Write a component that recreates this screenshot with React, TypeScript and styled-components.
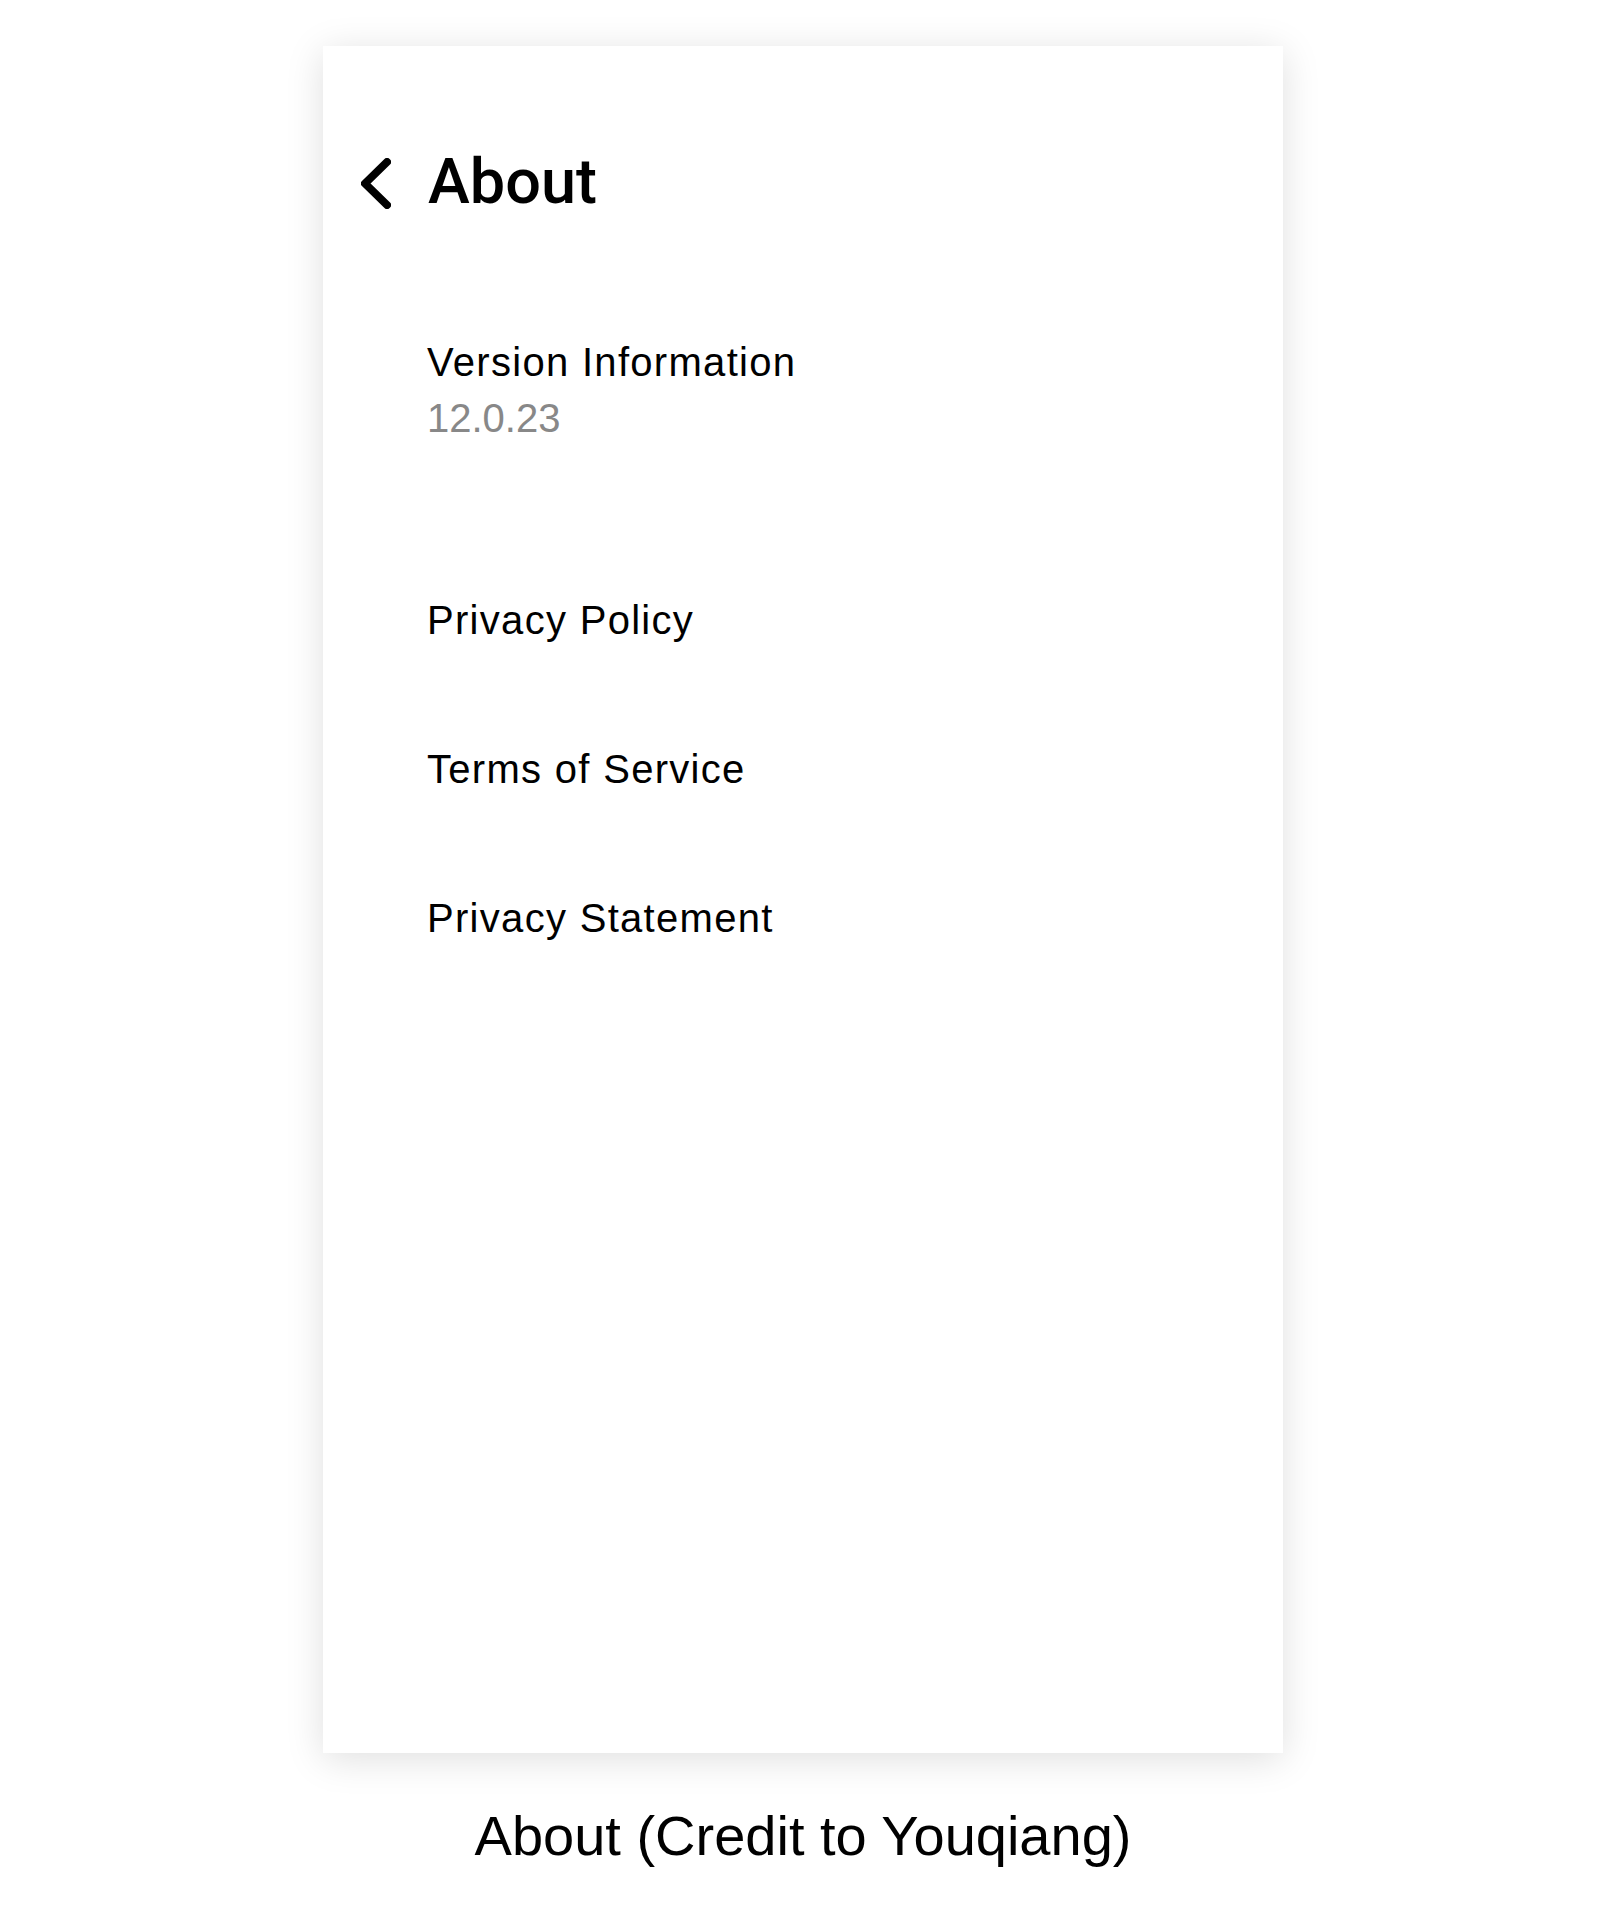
import React from "react";
import styled, { createGlobalStyle } from "styled-components";

const Global = createGlobalStyle`
  html, body { margin: 0; padding: 0; background: #ffffff; }
  body { font-family: "Liberation Sans", Arial, sans-serif; color: #000; }
`;

const Page = styled.div`
  display: flex;
  flex-direction: column;
  align-items: center;
  padding-top: 46px;
`;

const Card = styled.div`
  width: 960px;
  height: 1707px;
  background: #ffffff;
  box-shadow: 0 6px 36px rgba(0, 0, 0, 0.13);
  box-sizing: border-box;
  padding: 95.5px 0 0 38px;
  display: flex;
  flex-direction: column;
`;

const Header = styled.div`
  display: flex;
  align-items: flex-start;
  gap: 37px;
  height: 80px;
`;

const BackIcon = styled.svg`
  width: 30px;
  height: 51px;
  margin-top: 16.5px;
  flex: none;
`;

const Title = styled.h1`
  margin: 0;
  font-family: Roboto, "Liberation Sans", sans-serif;
  font-size: 63px;
  line-height: 80px;
  font-weight: 500;
`;

const List = styled.div`
  display: flex;
  flex-direction: column;
  padding-left: 66px;
  margin-top: 112.5px;
`;

const Section = styled.div<{ $gapAfter: number }>`
  display: flex;
  flex-direction: column;
  margin-bottom: ${(p) => p.$gapAfter}px;
`;

const Label = styled.div`
  font-size: 40px;
  line-height: 56px;
  font-weight: 400;
  letter-spacing: 1.3px;
`;

const Value = styled.div`
  font-size: 40px;
  line-height: 56px;
  color: #888888;
`;

const Caption = styled.div`
  margin-top: 48px;
  font-family: "Liberation Sans", Arial, sans-serif;
  font-size: 56px;
  line-height: 70px;
`;

export default function App() {
  return (
    <>
      <Global />
      <Page>
        <Card>
          <Header>
            <BackIcon viewBox="0 0 30 51" aria-hidden>
              <polyline
                points="26,4 4,25.5 26,47"
                fill="none"
                stroke="#000"
                strokeWidth={8}
                strokeLinecap="round"
                strokeLinejoin="round"
              />
            </BackIcon>
            <Title>About</Title>
          </Header>
          <List>
            <Section $gapAfter={146}>
              <Label>Version Information</Label>
              <Value>12.0.23</Value>
            </Section>
            <Section $gapAfter={93}>
              <Label>Privacy Policy</Label>
            </Section>
            <Section $gapAfter={93}>
              <Label>Terms of Service</Label>
            </Section>
            <Section $gapAfter={0}>
              <Label>Privacy Statement</Label>
            </Section>
          </List>
        </Card>
        <Caption>About (Credit to Youqiang)</Caption>
      </Page>
    </>
  );
}
